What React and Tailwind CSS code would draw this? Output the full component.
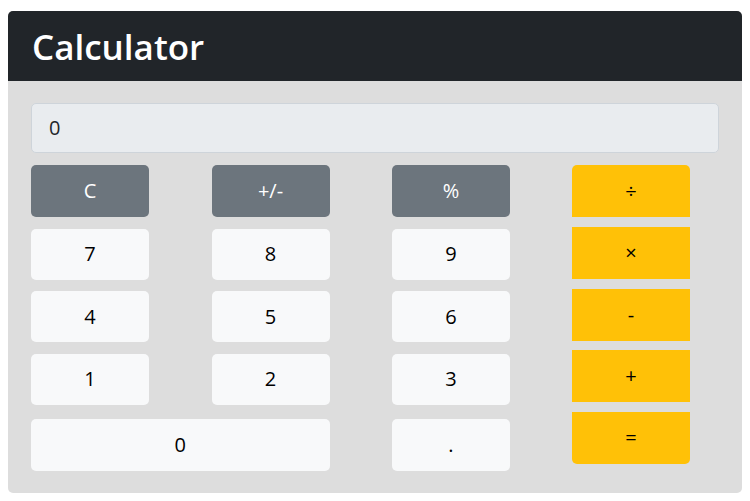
import React from 'react';

const digitRows = [
  ['7', '8', '9'],
  ['4', '5', '6'],
  ['1', '2', '3'],
];

const ops = ['÷', '×', '-', '+', '='];

const Key = ({ label, className = '' }) => (
  <button
    className={`h-[51px] rounded-[5px] text-[20px] leading-none ${className}`}
  >
    {label}
  </button>
);

export default function App() {
  return (
    <div className="min-h-screen bg-white px-2 pt-[11px] font-['Open_Sans','Noto_Sans',sans-serif]">
      <div className="w-[734px] overflow-hidden rounded-[5px] bg-[#dddddd]">
        <div className="flex h-[70px] items-center bg-[#212529] px-[24px]">
          <h1 className="text-[35px] font-semibold leading-none text-white">Calculator</h1>
        </div>

        <div className="px-[23px] pb-[22px] pt-[22px]">
          <div className="flex h-[50px] items-center rounded-[5px] border border-[#ced4da] bg-[#e9ecef] pl-[17px] text-[20px] text-[#212529]">
            0
          </div>

          <div className="mt-[12px] flex gap-x-[62px]">
            <div className="grid w-[479px] grid-cols-[118px_118px_118px] gap-x-[62.5px] gap-y-[11.5px]">
              <Key label="C" className="h-[52px] bg-[#6c757d] text-white" />
              <Key label="+/-" className="h-[52px] bg-[#6c757d] text-white" />
              <Key label="%" className="h-[52px] bg-[#6c757d] text-white" />
              {digitRows.flat().map((d) => (
                <Key key={d} label={d} className="bg-[#f8f9fa] text-black" />
              ))}
              <Key label="0" className="col-span-2 mt-[3px] h-[52px] bg-[#f8f9fa] text-black" />
              <Key label="." className="mt-[3px] h-[52px] bg-[#f8f9fa] text-black" />
            </div>

            <div className="flex w-[118px] flex-col gap-y-[9.75px]">
              {ops.map((op, i) => (
                <button
                  key={op}
                  className={`h-[52px] bg-[#ffc107] text-[20px] leading-none text-black ${
                    i === 0 ? 'rounded-t-[5px]' : ''
                  } ${i === ops.length - 1 ? 'rounded-b-[5px]' : ''}`}
                >
                  {op}
                </button>
              ))}
            </div>
          </div>
        </div>
      </div>
    </div>
  );
}
